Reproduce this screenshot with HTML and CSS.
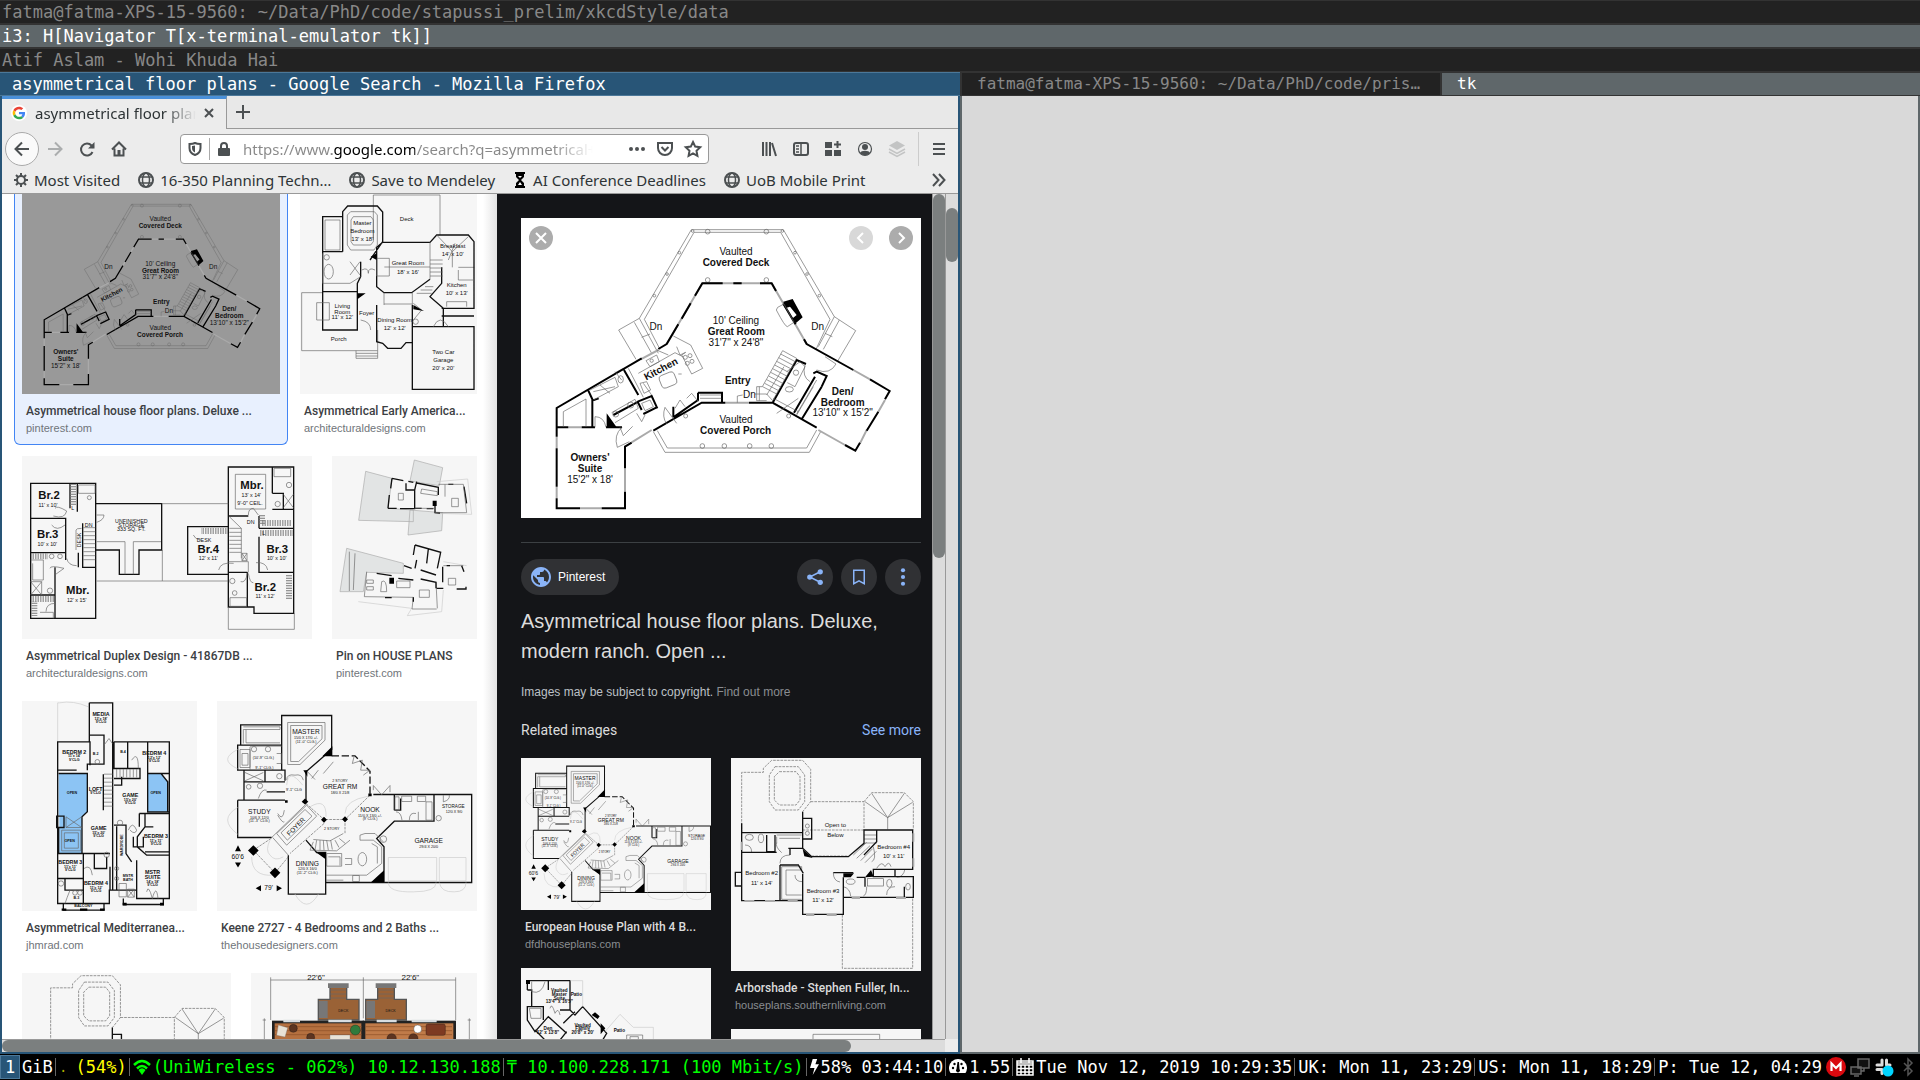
FILE: index.html
```html
<!DOCTYPE html>
<html lang="en">
<head>
<meta charset="utf-8">
<title>i3 desktop</title>
<link rel="stylesheet" href="styles.css">
</head>
<body>
<div class="desktop">
  <div class="titlebar">fatma@fatma-XPS-15-9560: ~/Data/PhD/code/stapussi_prelim/xkcdStyle/data</div>
  <div class="titlebar titlebar-inactive">i3: H[Navigator T[x-terminal-emulator tk]]</div>
  <div class="titlebar">Atif Aslam - Wohi Khuda Hai</div>

  <main class="split">
    <section class="pane">
      <div class="titlebar titlebar-focused">asymmetrical floor plans - Google Search - Mozilla Firefox</div>
      <div class="firefox">
        <div class="tabstrip">
          <div class="tab">
            <svg class="i16" viewBox="0 0 48 48"><g stroke="none"><circle cx="24" cy="24" r="24" fill="#fff"/><g transform="translate(5 5) scale(.79)"><path fill="#ea4335" d="M24 9.5c3.5 0 6.7 1.200 9.200 3.600l6.900-6.900C35.900 2.400 30.500 0 24 0 14.600 0 6.500 5.400 2.600 13.200l8 6.200C12.400 13.700 17.700 9.500 24 9.500z"/><path fill="#4285f4" d="M47 24.500c0-1.600-.2-3.100-.4-4.500H24v9h12.900c-.6 3-2.200 5.500-4.800 7.200l7.700 6C44.400 38 47 31.800 47 24.500z"/><path fill="#fbbc05" d="M10.500 28.600c-.5-1.500-.8-3-.8-4.600s.3-3.100.8-4.600l-8-6.200C.9 16.500 0 20.100 0 24s.9 7.500 2.600 10.800z"/><path fill="#34a853" d="M24 48c6.500 0 11.900-2.100 15.900-5.800l-7.700-6c-2.200 1.500-4.900 2.300-8.200 2.300-6.300 0-11.600-4.200-13.500-9.900l-8 6.200C6.500 42.600 14.600 48 24 48z"/></g></g></svg>
            <span class="tab-label">asymmetrical floor plans</span>
            <button class="icon-btn" aria-label="Close tab"><svg class="i10" viewBox="0 0 10 10"><path d="M1 1l8 8M9 1L1 9"/></svg></button>
          </div>
          <button class="icon-btn newtab" aria-label="New tab"><svg class="i14" viewBox="0 0 14 14"><path d="M7 0v14M0 7h14"/></svg></button>
        </div>

        <div class="navbar">
          <button class="icon-btn back" aria-label="Back"><svg class="i16" viewBox="0 0 16 16"><path d="M15 8H1.500M8 1.500L1.500 8 8 14.500"/></svg></button>
          <button class="icon-btn faded" aria-label="Forward"><svg class="i16" viewBox="0 0 16 16"><path d="M1 8h13.500M8 1.500L14.500 8 8 14.500"/></svg></button>
          <button class="icon-btn" aria-label="Reload"><svg class="i16" viewBox="0 0 16 16"><path d="M13.500 11A6 6 0 1 1 12.500 4.500L14.500 6.500"/><path class="solid" d="M15.500 1v6.500H9z"/></svg></button>
          <button class="icon-btn home" aria-label="Home"><svg class="i16" viewBox="0 0 16 16"><path d="M1 8.500L8 1.500l7 7M3.500 7.500v7h9v-7"/><path class="solid" d="M6.500 9h3v6h-3z"/></svg></button>
          <div class="urlbar">
            <svg class="i14" viewBox="0 0 14 14"><path d="M7 1C5 2 3 2 1.500 2v4c0 4 2.500 6 5.500 7 3-1 5.500-3 5.500-7V2C11 2 9 2 7 1z"/><path class="solid" d="M7 3.500v7C5 9.500 4 8 4 6V4z"/></svg>
            <span class="rule"></span>
            <svg class="i14" viewBox="0 0 14 14"><rect class="solid" x="1" y="6" width="12" height="8" rx="1"/><path d="M4 7V4a3 3 0 0 1 6 0v3"/></svg>
            <input class="url" type="text" aria-label="Address" value="https://www.google.com/search?q=asymmetrical+floor">
            <button class="icon-btn" aria-label="Page actions"><svg class="i16" viewBox="0 0 16 16"><g class="solid"><circle cx="2" cy="8" r="2"/><circle cx="8" cy="8" r="2"/><circle cx="14" cy="8" r="2"/></g></svg></button>
            <button class="icon-btn" aria-label="Pocket"><svg class="i16" viewBox="0 0 16 16"><path d="M1 2h14v5a7 7 0 0 1-14 0z"/><path d="M4.500 6L8 9.500 11.500 6"/></svg></button>
            <button class="icon-btn" aria-label="Bookmark"><svg class="i16" viewBox="0 0 16 16"><path d="M8 1l2.200 4.600 5 .7-3.700 3.500.9 5L8 12.400l-4.400 2.400.9-5L.8 6.300l5-.7z"/></svg></button>
          </div>
          <div class="tools">
            <button class="icon-btn" aria-label="Library"><svg class="i16" viewBox="0 0 16 16"><path d="M2 1v14M5.500 1v14M9 1v14M11 2l4 13"/></svg></button>
            <button class="icon-btn" aria-label="Sidebars"><svg class="i16" viewBox="0 0 16 16"><rect x="1" y="2" width="14" height="12" rx="2"/><path d="M8 2v12M3 5h3M3 8h3M3 11h3" stroke-width="1.500"/></svg></button>
            <button class="icon-btn" aria-label="Extensions"><svg class="i16" viewBox="0 0 16 16"><path class="solid" d="M0 1h7v6H0zM0 9h7v6H0zM9 9h7v6H9z"/><path d="M12.500 0v7M9 3.500h7"/></svg></button>
            <button class="icon-btn" aria-label="Account"><svg class="i16" viewBox="0 0 16 16"><circle cx="8" cy="8" r="6.500" stroke-width="1.200"/><circle class="solid" cx="8" cy="6" r="3"/><path class="solid" d="M3 12c1-3 9-3 10 0-2 3-8 3-10 0z"/></svg></button>
            <button class="icon-btn layers" aria-label="Layers"><svg class="i16" viewBox="0 0 16 16"><path class="solid" d="M8 0l8 4.500L8 9 0 4.500z"/><path d="M0 8l8 4.500L16 8M0 11l8 4.500 8-4.500" stroke-width="1.500"/></svg></button>
            <span class="rule tall"></span>
            <button class="icon-btn" aria-label="Menu"><svg class="i14" viewBox="0 0 14 14"><path d="M1 2h12M1 7h12M1 12h12"/></svg></button>
          </div>
        </div>

        <nav class="bookmarks">
          <a href="#"><svg class="i14" viewBox="0 0 14 14"><circle cx="7" cy="7" r="4"/><path d="M7 0v3M7 11v3M0 7h3M11 7h3M2 2l2 2M10 10l2 2M12 2l-2 2M4 10l-2 2"/></svg>Most Visited</a>
          <a href="#"><svg class="i16" viewBox="0 0 16 16"><g id="globe"><circle cx="8" cy="8" r="7"/><ellipse cx="8" cy="8" rx="3.500" ry="7" stroke-width="1.500"/><path d="M2 5h12M2 11h12" stroke-width="1.500"/></g></svg>16-350 Planning Techn…</a>
          <a href="#"><svg class="i16" viewBox="0 0 16 16"><use href="#globe"/></svg>Save to Mendeley</a>
          <a href="#"><svg class="i14" viewBox="0 0 14 14"><path d="M2 0h10M2 14h10" stroke="#000"/><path d="M3 1h8v3L8 7l3 3v3H3v-3l3-3-3-3z" fill="#000" stroke="none"/><path d="M5 3h4L7 5zM5 12l2-3 2 3z" fill="#fff" stroke="none"/></svg>AI Conference Deadlines</a>
          <a href="#"><svg class="i16" viewBox="0 0 16 16"><use href="#globe"/></svg>UoB Mobile Print</a>
          <button class="icon-btn more" aria-label="More bookmarks"><svg class="i14" viewBox="0 0 14 14"><path d="M1 1l5.500 6L1 13M7 1l5.500 6L7 13"/></svg></button>
        </nav>

        <div class="viewport">
          <div class="page">
            <div class="results">
              <div class="row row-a">
                <figure class="card selected" style="flex-grow:258">
                  <svg class="dim" viewBox="68 71 1194 927"><use href="#deluxe"/></svg>
                  <figcaption><b>Asymmetrical house floor plans. Deluxe ...</b><span>pinterest.com</span></figcaption>
                </figure>
                <figure class="card" style="flex-grow:177">
                  <svg viewBox="900 12 531 600"><g id="early" class="plan">
                    <path class="thin" d="M1120 150V15H1320V135M905 308H968M905 308V482H1133V420M1068 482V505H1133V482M1068 490h65M1068 498h65M1153 231H1290M1375 232H1423"/>
                    <path class="wall" d="M968 305V80H1028V65L1043 48H1132L1148 66V155L1110 210M1028 65V185M968 185H1028M1148 157H1290L1310 135H1405L1422 155V355H1325M1130 210V290L1152 308H1235L1290 268M1130 210V172L1148 157M968 305H1072V420H968V305M1072 305V280L1082 260V215M1130 345V455L1148 460L1163 475H1203L1218 458H1237V345M1237 410H1422V598H1237V410M1325 232V280L1290 320L1330 355V410M1325 378H1422"/>
                    <path class="thin" d="M1290 157V268M1052 65H1123L1132 75V165L1122 180H1052L1042 165V75ZM1060 80H1113L1120 90V155L1112 165H1060L1053 155V90ZM975 90H1020V180H975ZM950 338H988V390H950ZM1130 205H1168V258H1130ZM1310 135L1357 185 1405 140M1357 185V232M968 190V280H1050L1082 260M1050 215L1080 255M1080 215L1050 255M1152 308V345M1237 308V345M1152 342H1237M1290 210H1328M1290 222H1328M1290 234H1328M1290 246H1328M1290 258H1328M1250 310l45 0M1262 300l35 0M1275 290l25 0M1085 240q20-10 20 10q0-20 20-10M1082 390q30 5 30 30M1300 410q20-40 45 0M1240 340l25 20l-25 30M1375 240v30h48M1340 350v-15h60v15M1345 210l20-50"/>
                    <ellipse class="thin" cx="986" cy="245" rx="14" ry="22"/><circle class="thin" cx="980" cy="202" r="8"/><circle class="thin" cx="1247" cy="395" r="8"/>
                    <path class="fill" d="M1130 190v20l-18-10zM1072 310l25 0-25 18zM1240 345l32 18-32-5z"/>
                    <g class="lab s18"><text x="1220" y="94">Deck</text><text x="1087" y="104">Master</text><text x="1087" y="129">Bedroom</text><text x="1087" y="153">13' x 18'</text><text x="1224" y="226">Great Room</text><text x="1224" y="251">18' x 16'</text><text x="1358" y="174">Breakfast</text><text x="1358" y="198">14' x 10'</text><text x="1370" y="292">Kitchen</text><text x="1370" y="316">10' x 13'</text><text x="1027" y="354">Living</text><text x="1027" y="371">Room</text><text x="1027" y="388">11' x 12'</text><text x="1100" y="376">Foyer</text><text x="1184" y="396">Dining Room</text><text x="1184" y="420">12' x 12'</text><text x="1016" y="452">Porch</text><text x="1330" y="491">Two Car</text><text x="1330" y="516">Garage</text><text x="1330" y="541">20' x 20'</text></g>
                  </g></svg>
                  <figcaption><b>Asymmetrical Early America...</b><span>architecturaldesigns.com</span></figcaption>
                </figure>
              </div>

              <div class="row row-b">
                <figure class="card" style="flex-grow:290">
                  <svg viewBox="66 33 870 549"><g class="plan">
                    <path class="wall" d="M92 115H287V520H92ZM92 220H197V345M92 323H197M232 115V200M210 115V190M248 235V367H287M165 367V520M92 450H165M235 323V367M287 176H485V315H417V388H358V315H287M685 66H881V505H762V486H685ZM563 245H685V388H563ZM685 213H745M817 66V145M817 193H881M777 250H881M777 275V382H881M817 145H850V193M742 382V486M685 382H742M777 213V250"/>
                    <path class="thin" d="M485 176H685M290 408H685M487 315V408M685 486V553H883V505M706 88H797V192H706ZM92 345H130V405H98V355M92 410L125 450M125 410L92 450M92 410H125V450M850 148L880 188M880 148L850 188M235 120H285V145H235ZM822 70H872V95H822ZM690 458H740V484H690ZM290 290H375V388M400 388V290H483M120 502H160V520M745 382V350H685M726 325H741V347H726ZM726 325L741 347M741 325L726 347M228 315V255Q228 250 245 250M580 270q5 12 20 15"/>
                    <path class="thin" d="M250 248h36M250 260h36M250 272h36M250 284h36M250 296h36M250 308h36M250 320h36M250 332h36M250 344h36M688 250h36M688 262h36M688 274h36M688 286h36M688 298h36M688 310h36M688 322h36M724 250V340M688 215L724 250"/>
                    <path class="hatch" d="M219 118V182M605 258H683M780 264H878M786 234H876M95 462H162M867 390V465M95 334H142M103 470V515M786 210V240"/>
                    <path class="thin" d="M165 190q5-10 35 8q-5 25-40 15M155 240q15 20 40 0M150 370q0-10 42 0l-25 18M290 210h22q0 15-22 22M138 500q0-25 28-25M200 340q5 22 30 22M656 375q5-25 45-20M803 375q-5-25-35-22M745 385q5 30 15 28M742 385q-5 30-20 25M745 210q0-20 15-20l15 20"/>
                    <circle class="thin" cx="268" cy="158" r="6"/><circle class="thin" cx="155" cy="334" r="7"/><circle class="thin" cx="180" cy="334" r="7"/><circle class="thin" cx="867" cy="120" r="8"/><circle class="thin" cx="833" cy="177" r="8"/><circle class="thin" cx="150" cy="437" r="8"/><circle class="thin" cx="697" cy="408" r="8"/><circle class="thin" cx="704" cy="444" r="7"/>
                    <g class="lab bold s34"><text x="147" y="163">Br.2</text><text x="143" y="279">Br.3</text><text x="233" y="448">Mbr.</text><text x="756" y="132">Mbr.</text><text x="625" y="323">Br.4</text><text x="832" y="323">Br.3</text><text x="796" y="437">Br.2</text></g>
                    <g class="lab s16"><text x="144" y="186">11' x 10'</text><text x="142" y="302">10' x 10'</text><text x="230" y="470">12' x 15'</text><text x="754" y="155">13' x 14'</text><text x="750" y="180">9'-0" CEIL.</text><text x="625" y="345">12' x 11'</text><text x="830" y="345">10' x 10'</text><text x="795" y="459">11' x 12'</text><text x="394" y="233">UNFINISHED</text><text x="394" y="245">STORAGE</text><text x="394" y="257">333 SQ. FT.</text><text x="266" y="245">DN</text><text x="752" y="237">DN</text><text x="612" y="290">DESK</text><text x="791" y="270">L</text><text x="218" y="196">L</text><text transform="translate(243 285) rotate(-90)">DESK</text></g>
                  </g></svg>
                  <figcaption><b>Asymmetrical Duplex Design - 41867DB ...</b><span>architecturaldesigns.com</span></figcaption>
                </figure>
                <figure class="card" style="flex-grow:145">
                  <svg viewBox="996 33 435 549"><g class="plan">
                    <path class="shade" d="M1097 79L1176 100 1164 190 1240 195V230L1076 226ZM1243 45L1328 68 1318 122 1230 108ZM1230 195L1328 203 1325 257 1224 270ZM1040 310L1210 355V385L1100 382 1090 440 1020 440ZM1176 100"/>
                    <path class="ghost" d="M1310 110L1403 102 1415 208 1310 205M1075 470L1235 490 1222 512 1325 500 1330 435M1330 350L1400 362"/>
                    <path class="wall" d="M1176 100L1210 107M1225 109L1240 112M1250 114L1315 127V150M1164 190H1190M1200 191H1244V165M1176 100L1172 130M1168 150L1164 190M1218 115V135H1244L1250 110M1305 180V203L1320 204M1345 118H1360M1392 125L1400 175M1244 135V190H1265M1280 191H1300"/>
                    <path class="thin" d="M1315 118H1390L1400 203H1305M1244 190H1305M1100 380L1093 455 1240 457 1236 492H1310M1308 412L1312 490M1330 362H1390"/>
                    <path class="wall" d="M1245 300L1322 322 1312 370M1245 300L1240 330M1285 312L1280 355M1250 345L1245 370M1212 362L1235 370M1262 375L1308 390M1262 402L1308 412V430M1310 430H1330M1370 432H1398V425M1385 362L1392 380M1328 365V412M1155 458H1175M1130 385L1175 392M1340 362H1350M1195 400L1240 405M1240 457V470"/>
                    <path class="thin" d="M1265 132L1312 140V152L1262 145ZM1195 145h15v20h-15zM1335 118V155M1355 160h20v25h-20zM1145 410q15-10 15 30h-18zM1258 435h30v22h-30zM1345 400h22v20h-22zM1190 408h40v20h-40zM1100 405h20v10h-20zM1100 425h20v10h-20zM1048 320v118M1065 325l-5 110"/>
                    <path class="fill" d="M1298 167h12v16h-12zM1168 398h14v18h-14z"/>
                  </g></svg>
                  <figcaption><b>Pin on HOUSE PLANS</b><span>pinterest.com</span></figcaption>
                </figure>
              </div>

              <div class="row row-c">
                <figure class="card" style="flex-grow:175">
                  <svg viewBox="66 33 525 629"><g class="plan">
                    <path d="M176 250H262V365L246 380V490H178V378H176ZM443 250H483L503 275V365H443Z" fill="#8cc4f4" stroke="none"/>
                    <path class="ghost" d="M173 155V38H178Q220 30 265 50"/>
                    <path class="wall" d="M268 38H338V600H328V640H173V155H270V225M268 38V155M270 135H312V222H262V240M176 250H262V365L246 380V490M173 240H230M170 378H192V412H170ZM176 412V490H330M173 565H250V490M195 565V600H250M250 565V640M283 490V535H320V500M330 530V600M310 252V360M270 155V222M173 490V640M190 642V660H312V642M342 155H508V625H410V510V600H350M342 155V235H420V265H342M342 285H365V260M383 155V235M443 155V250H508M443 250V365H508M418 370H508V400M435 370V410H460M435 485H508V495H440L412 470V440L435 410M418 370V410M342 405H378V490L395 515M350 408V600M328 600H350M370 625V643H490V625M483 250L503 275V365M400 440V470H430V440"/>
                    <path class="thin" d="M312 252h26M312 264h26M312 276h26M312 288h26M312 300h26M312 312h26M312 324h26M312 336h26M312 348h26M350 237v25M360 237v25M370 237v25M380 237v25M390 237v25M400 237v25M410 237v25M185 420H242V482H185ZM193 428H235V474H193ZM198 380L245 412M245 380L198 412M198 380V412H245M357 580h22v40h-22zM383 597h20v24h-20zM383 597l20 24M403 597l-20 24M385 420q12-30 25 0q-5 15-20 0M440 605q5-25 17 20q12-45 17 0M252 535q20-15 25 20M210 600q-10 25-15 40M395 210q20-30 20 25M312 165l15-20 10 15"/>
                    <circle class="thin" cx="292" cy="215" r="7"/><circle class="thin" cx="183" cy="580" r="8"/><circle class="thin" cx="225" cy="608" r="7"/><circle class="thin" cx="240" cy="608" r="7"/><circle class="thin" cx="350" cy="535" r="6"/><circle class="thin" cx="350" cy="565" r="6"/><circle class="thin" cx="320" cy="494" r="8"/><circle class="thin" cx="360" cy="398" r="8"/>
                    <path class="fill" d="M240 655h22v7h-22zM185 655h14v7h-14zM300 655h14v7h-14zM368 638h12v8h-12zM480 638h12v8h-12z"/>
                    <g class="lab bold s16"><text x="303" y="78">MEDIA</text><text x="223" y="191">BEDRM 2</text><text x="463" y="196">BEDRM 4</text><text x="287" y="302">LOFT</text><text x="391" y="322">GAME</text><text x="296" y="421">GAME</text><text x="468" y="445">BEDRM 3</text><text x="211" y="522">BEDRM 3</text><text x="288" y="585">BEDRM 4</text><text x="458" y="553">MSTR</text><text x="458" y="567">SUITE</text></g>
                    <g class="lab bold s12"><text x="303" y="89">13'x 18'</text><text x="303" y="99">9'CLG</text><text x="223" y="202">11'x 14'</text><text x="223" y="212">9'CLG</text><text x="463" y="207">12'x 12'</text><text x="463" y="217">9'CLG</text><text x="287" y="312">9'CLG</text><text x="391" y="333">15'x 20'</text><text x="391" y="343">9'CLG</text><text x="296" y="432">15'x 20'</text><text x="296" y="442">9'CLG</text><text x="468" y="456">11'x 11'</text><text x="468" y="466">9'CLG</text><text x="211" y="533">11'x 11'</text><text x="211" y="543">9'CLG</text><text x="288" y="596">11'x 12'</text><text x="288" y="606">9'CLG</text><text x="458" y="579">14'x 18'</text><text x="458" y="589">9'CLG</text><text x="216" y="312">OPEN</text><text x="467" y="311">OPEN</text><text x="209" y="455">OPEN</text><text x="250" y="650">BALCONY</text><text x="287" y="196">B.2</text><text x="369" y="190">B.4</text><text x="229" y="628">B.3</text><text x="384" y="562">MSTR</text><text x="384" y="572">BATH</text><text transform="translate(368 465) rotate(-90)">WARDROBE</text></g>
                  </g></svg>
                  <figcaption><b>Asymmetrical Mediterranea...</b><span>jhmrad.com</span></figcaption>
                </figure>
                <figure class="card" style="flex-grow:260">
                  <svg viewBox="651 33 780 629"><g id="keene" class="plan">
                    <path class="wall" d="M722 165V104H845M845 240V76H995V178L918 245V335M845 165H713V240H855V272M732 240V275H795V242M732 330V275M855 275H795M713 330H855M713 330V442H815M1120 313H1415V577H1150M1183 315V360M1302 315V393H1183L1130 445L1152 470V577H978M1183 360H1202V325M865 495V612H977V487H950L918 450M800 305H855"/>
                    <path class="wall broken" d="M995 197H1065L1110 243V315"/>
                    <path class="thin" d="M815 442L920 340M818 442L865 495M730 110H840V118H730V160M738 118V158H840M863 97H975V150L900 223H863ZM872 106H966V146L896 214H872ZM720 178H750V232H720ZM726 190H744V225H726ZM750 168H845M750 240V170M735 247L790 272M790 247L735 272M970 250L1000 215M935 265L955 240M918 240L945 268M830 430L920 345 950 378 860 465ZM843 428L915 358 936 378 862 450ZM980 490H1025V528H980ZM985 500H1020V526M978 555H1100L1145 520V470L1120 450H1080V435L1095 430H1125L1150 455M978 570H1030M1132 520V470L1115 460M1058 556h20v18h-20zM1205 318h30v16h-30zM1252 318h25v16h-25zM1278 335h18v55h-18zM1185 320h12v40h-12zM1255 365v25M830 190h14v30h-14"/>
                    <path class="thin" d="M940 455l-10 25M950 450l-5 30M960 450l0 30M970 450l2 30M980 450l5 30M992 450l5 28M1005 450l12 22M1018 445l18 15M940 448L990 452 1030 430M930 480L1010 482 1050 450"/>
                    <path class="ghost" d="M713 178q-60 30 0 58M713 352q-60 35 0 80M885 612q35 60 70 0M1165 502H1310V572H1165ZM1318 502H1398V572H1318ZM1165 577q0 30 75 28q70 0 68-28M1318 577q5 30 45 28q35 0 35-28M755 500q0 60 65 55M930 350Q980 320 978 380M1035 370Q1035 330 1105 318M810 450q-15 30 0 45q15 20 40 5M860 285q5-55 48 0"/>
                    <path class="thin dash" d="M760 480L825 548M865 500L825 548M918 340L972 388H1035L1110 315M1035 388V430M972 388V400M972 400L870 490M760 480L813 445"/>
                    <path class="thin" d="M1120 300v-14l25 28 25-28v20M1062 200l-5 20 30-10-5 30 28 0-20 15M833 370q15 25 20-10M833 375q15 25 20 20M860 270q0-20 25-15q20-5 25 15M1188 365q15 0 18 25M1228 390q0-25 20-20M1330 315v20q20-5 18-20M775 325q10-30 25-25M1035 505h20v18h-20"/>
                    <circle class="thin" cx="762" cy="177" r="8"/><circle class="thin" cx="804" cy="177" r="8"/><circle class="thin" cx="780" cy="287" r="8"/><circle class="thin" cx="838" cy="258" r="8"/><circle class="thin" cx="746" cy="290" r="7"/><ellipse class="thin" cx="1087" cy="507" rx="13" ry="20"/><circle class="thin" cx="1316" cy="384" r="8"/><circle class="thin" cx="1150" cy="447" r="10"/>
                    <path class="fill" d="M997 168v30h-30zM1152 540v37h-40zM977 487v20l-28-20zM760 465l16 16-16 16-16-16zM825 532l16 16-16 16-16-16zM714 465l9 18h-18zM714 532l9-15h-18zM767 594l16-9v18zM846 594l-16-9v18zM972 380l9 9-9 9-9-9zM1035 378l9 9-9 9-9-9zM910 240h12v20zM915 325l10 10-10 8-10-8zM855 330h8v8h-8zM1105 310h10v8h-10z"/>
                    <g class="lab s20"><text x="918" y="133">MASTER</text><text x="1020" y="297">GREAT RM</text><text x="778" y="373">STUDY</text><text x="1110" y="367">NOOK</text><text class="s14" x="1360" y="355">STORAGE</text><text x="1286" y="459">GARAGE</text><text x="922" y="528">DINING</text><text transform="translate(893 414) rotate(-45)">FOYER</text><text x="713" y="507">60'6</text><text x="806" y="601">79'</text></g>
                    <g class="lab s12"><text x="918" y="148">15/0 X 17/0 +/-</text><text x="918" y="159">(11'-0" CLG.)</text><text x="790" y="208">(10'-9" CLG.)</text><text x="793" y="237">9'-1" CLG.)</text><text x="1020" y="276">2 STORY</text><text x="1020" y="311">18/0 X 21/8</text><text x="778" y="387">10/6 X 12/0</text><text x="778" y="397">(11'-3" CLG.)</text><text x="1110" y="381">11/0 X 13/0 +/-</text><text x="1110" y="391">(9' CLG.)</text><text x="1362" y="369">12/0 X 9/0</text><text x="1286" y="473">29/4 X 20/0</text><text x="922" y="541">12/0 X 16/0</text><text x="922" y="552">(11'-2" CLG.)</text><text x="995" y="419">2 STORY</text><text x="882" y="303">9'-1" CLG</text></g>
                  </g></svg>
                  <figcaption><b>Keene 2727 - 4 Bedrooms and 2 Baths ...</b><span>thehousedesigners.com</span></figcaption>
                </figure>
              </div>

              <div class="row row-c">
                <figure class="card" style="flex-grow:209">
                  <svg viewBox="640 53 620 630" preserveAspectRatio="xMidYMin slice"><use href="#arbor"/></svg>
                </figure>
                <figure class="card" style="flex-grow:226">
                  <svg viewBox="753 849 678 630"><g class="plan">
                    <path class="thin" d="M812 870H1367M812 862V990M1090 862V985M1367 862V990M793 985V1070M1408 985V1070M788 990h10M1403 990h10"/>
                    <path fill="#9a6236" stroke="#555" stroke-width="4" d="M955 928H990V888H1040V928H1077V990H955ZM1097 928H1133V888H1183V928H1219V990H1097Z"/>
                    <path fill="#777" stroke="none" d="M984 880h62v14h-62zM1127 880h62v14h-62zM957 932h26v52h-26zM1099 932h26v52h-26z"/>
                    <path class="thin" d="M990 900h48M990 912h48M990 924h48M1133 900h48M1133 912h48M1133 924h48"/>
                    <rect x="820" y="996" width="268" height="480" fill="#b5703f" stroke="#222" stroke-width="8"/><rect x="1092" y="996" width="272" height="480" fill="#c07b49" stroke="#222" stroke-width="8"/>
                    <path stroke="#8d5027" stroke-width="2" d="M825 1010h260M825 1022h260M825 1034h260M1096 1010h260M1096 1022h260M1096 1034h260"/>
                    <path stroke="#d8dde0" stroke-width="8" d="M850 993h50M985 993h70M1130 993h60M1235 993h75"/>
                    <path fill="#e8e2d6" stroke="#777" d="M835 1005l28 8-8 28-25-5zM990 1035h60v30h-60z"/><circle cx="880" cy="1015" r="12" fill="#5c3420"/><circle cx="932" cy="1042" r="12" fill="#5c3420"/><circle cx="1066" cy="1020" r="15" fill="#2f7a3c"/><circle cx="1253" cy="1017" r="12" fill="#fff"/><rect x="1278" y="1002" width="58" height="34" rx="6" fill="#7d3a22"/><circle cx="1175" cy="1045" r="14" fill="#5c3420"/><circle cx="1240" cy="1045" r="14" fill="#5c3420"/>
                    <g class="lab s24"><text x="948" y="869">22'6"</text><text x="1231" y="869">22'6"</text></g>
                    <g class="lab s12"><text x="1030" y="966">DECK</text><text x="1172" y="966">DECK</text></g>
                  </g></svg>
                </figure>
              </div>
            </div>

            <aside class="detail">
              <div class="hero">
                <svg viewBox="63 84 1200 900"><g id="deluxe" class="plan">
                  <path class="thin" d="M574 119H850L1003 380L1067 422 1012 515M574 119L418 385 356 420 408 508M582 127H842L990 388L948 478M582 127L433 388 480 478M418 385L475 490M1003 380L955 470M403 397L455 490M1018 390L970 478M460 725L495 787H928L962 725M472 722L502 774H920L950 720"/>
                  <g class="thin"><circle cx="623" cy="125" r="7"/><circle cx="799" cy="125" r="7"/><circle cx="623" cy="270" r="7"/><circle cx="799" cy="270" r="7"/><circle cx="607" cy="768" r="7"/><circle cx="673" cy="768" r="7"/><circle cx="749" cy="768" r="7"/><circle cx="814" cy="768" r="7"/><circle cx="557" cy="678" r="6"/><circle cx="866" cy="678" r="6"/><circle cx="578" cy="123" r="4"/><circle cx="847" cy="123" r="4"/><circle cx="538" cy="188" r="4"/><circle cx="501" cy="252" r="4"/><circle cx="463" cy="317" r="4"/><circle cx="885" cy="188" r="4"/><circle cx="921" cy="252" r="4"/><circle cx="958" cy="317" r="4"/></g>
                  <path class="window" d="M607 280H815M607 280L500 462M422 508L475 480M345 550L372 536M815 280L920 462M1060 540L1110 568M1155 630L1135 665M1100 720L1080 760M955 720L1035 765M820 640L880 672M170 740V775M170 890V925M240 955H305M375 835V905M455 720L395 757M676 638H747M205 712H245"/>
                  <path class="heavy" d="M668 280H607L585 317M572 340L545 386M535 403L500 462L475 477M425 505L170 654V740M170 775V890M170 925V955H240M305 955H375V905M375 835V770L395 758M460 722L605 638H676M747 638H818L950 713M1035 765L1066 782L1080 758M1100 722L1135 665M1155 628L1169 603L1110 568M1060 540L920 462L912 448M887 403L850 341M828 303L815 280H780M170 712H205M245 712H285M318 712H366M277 712V628L265 602M277 632L296 625M372 540L415 615M818 638L890 510 918 522M594 608H666V636M594 608V630L520 682M413 635L455 618 472 655M413 635L425 660M340 675L415 635M940 550L950 545 980 558 965 590M905 688L965 590M882 668L945 560M700 280h25M470 652l-40 20M520 682V650"/>
                  <path class="fill" d="M850 335L878 327 908 382 887 400 878 385 890 375 870 350 855 355ZM320 712V670L350 712Z"/>
                  <path class="thin" d="M833 352L852 342 882 397 862 410Q855 410 829 360ZM520 438L572 465 608 535 575 552 545 495 557 487 540 495 530 470M415 550L525 488 548 500M385 535L430 622M430 580L455 615M270 600L345 562 355 590 280 630M280 605L345 590M300 585L330 610M190 710V665L258 627V710M345 545L365 570M335 668L405 628 415 655 345 698M860 545L900 515 915 530 885 590 862 578M820 625L895 665M830 670L895 625M890 672L950 570M438 512L470 495 478 515 450 530ZM470 480l35 15M420 580l12 30 20-10-12-25zM940 590l-50 85M425 640l25-10 10 20-25 12z"/>
                  <path class="thin" d="M848 482L787 590M890 505L818 632M848 482L890 505M842 492l42 22M836 503l42 22M830 514l42 22M824 525l42 22M818 536l42 22M812 547l42 22M806 558l42 22M800 569l42 22M794 580l42 22M788 590l42 22M852 530L800 615M787 590H770V632H800M778 590V632M765 612H800L818 632M600 615H664M600 625H664M545 552l-10 0"/>
                  <rect class="thin" x="480" y="550" width="48" height="40" rx="10" transform="rotate(-22 504 570)"/>
                  <g class="thin"><circle cx="347" cy="672" r="9"/><circle cx="392" cy="645" r="9"/><circle cx="888" cy="548" r="8"/><ellipse cx="868" cy="598" rx="12" ry="8"/><ellipse cx="362" cy="568" rx="8" ry="11"/><circle cx="556" cy="502" r="6"/><circle cx="570" cy="497" r="6"/><circle cx="562" cy="520" r="6"/><circle cx="576" cy="514" r="6"/><circle cx="455" cy="512" r="5"/></g>
                  <path class="thin" d="M285 712V680Q312 680 318 712M366 712Q340 735 352 772L388 755M530 700L495 652Q485 680 500 702M712 638V618L728 615M1008 522Q990 555 950 540M975 500L1008 522M915 525Q905 560 930 575M450 432L425 442M975 430L997 440M360 712l10 25 28-28M410 670l15 25 10-20M525 655l15-25 15 20M560 625l15-15 20 25"/>
                  <g class="lab s30"><text x="708" y="196">Vaulted</text><text x="708" y="403">10' Ceiling</text><text x="708" y="467">31'7" x 24'8"</text><text x="468" y="420">Dn</text><text x="953" y="420">Dn</text><text x="748" y="624">Dn</text><text x="708" y="700">Vaulted</text><text x="1028" y="679">13'10" x 15'2"</text><text x="270" y="879">15'2" x 18'</text></g>
                  <g class="lab bold s30"><text x="708" y="228">Covered Deck</text><text x="709" y="435">Great Room</text><text x="713" y="581">Entry</text><text x="707" y="732">Covered Porch</text><text x="1028" y="615">Den/</text><text x="1028" y="647">Bedroom</text><text x="270" y="814">Owners'</text><text x="270" y="846">Suite</text><text transform="translate(487 546) rotate(-28)">Kitchen</text></g>
                </g></svg>
                <button class="round close" aria-label="Close"><svg class="i16" viewBox="0 0 16 16"><path d="M3 3l10 10M13 3L3 13"/></svg></button>
                <button class="round prev" aria-label="Previous"><svg class="i16" viewBox="0 0 16 16"><path d="M10 3L5 8l5 5"/></svg></button>
                <button class="round next" aria-label="Next"><svg class="i16" viewBox="0 0 16 16"><path d="M6 3l5 5-5 5"/></svg></button>
              </div>
              <div class="source">
                <a class="pill" href="#"><svg class="i24" viewBox="0 0 24 24"><path fill="#8ab4f8" d="M12 2C6.480 2 2 6.480 2 12s4.480 10 10 10 10-4.480 10-10S17.520 2 12 2zm-1 17.930c-3.950-.49-7-3.850-7-7.930 0-.62.080-1.210.21-1.790L9 15v1c0 1.100.9 2 2 2v1.930zm6.900-2.540c-.26-.81-1-1.390-1.900-1.390h-1v-3c0-.55-.45-1-1-1H8v-2h2c.55 0 1-.45 1-1V7h2c1.100 0 2-.9 2-2v-.41c2.930 1.190 5 4.060 5 7.410 0 2.080-.8 3.970-2.100 5.390z"/></svg>Pinterest</a>
                <button class="disc" aria-label="Share"><svg class="i20" viewBox="0 0 24 24"><path stroke="#8ab4f8" stroke-width="2" d="M19 5L5 12l14 7"/><g fill="#8ab4f8"><circle cx="19" cy="5" r="3.500"/><circle cx="5" cy="12" r="3.500"/><circle cx="19" cy="19" r="3.500"/></g></svg></button>
                <button class="disc" aria-label="Save"><svg class="i20" viewBox="0 0 24 24"><path stroke="#8ab4f8" stroke-width="2" fill="none" d="M5 3h14v18l-7-4-7 4z"/></svg></button>
                <button class="disc" aria-label="More"><svg class="i20" viewBox="0 0 24 24"><g fill="#8ab4f8"><circle cx="12" cy="3" r="2.800"/><circle cx="12" cy="12" r="2.800"/><circle cx="12" cy="21" r="2.800"/></g></svg></button>
              </div>
              <h2>Asymmetrical house floor plans. Deluxe, modern ranch. Open ...</h2>
              <p class="legal">Images may be subject to copyright. <a href="#">Find out more</a></p>
              <div class="related-head"><h3>Related images</h3><a href="#">See more</a></div>
              <div class="related">
                <div class="col">
                  <figure>
                    <svg class="h152" viewBox="664 44 753 602"><use href="#keene"/></svg>
                    <figcaption><b>European House Plan with 4 B...</b><span>dfdhouseplans.com</span></figcaption>
                  </figure>
                  <figure>
                    <svg class="h213" viewBox="63 684 570 639"><g class="plan">
                      <path class="wall" d="M82 750V722H145V750M145 722H210V770M82 750H95V800H82V840L105 875L145 830 200 880M210 770V810L225 825L248 800L320 880 305 905M180 810H210M82 800H130V840M190 850L225 815M105 870L140 905M200 875L180 900"/>
                      <path class="ghost" d="M210 722H248V800M315 875L360 823 400 862H460V900"/>
                      <path class="thin" d="M95 725v30q30 10 40-30M88 805h35v30h-30zM150 805q5-20 15 15q10-20 15 5M380 905V885H428V905M390 905v-15h25v15"/>
                      <path class="fill" d="M275 825l10-8 14 12-6 8zM302 850l14 15-14 18zM78 720h12v12h-12z"/>
                      <g class="lab s14 bold"><text x="178" y="756">Vaulted</text><text x="178" y="768">Master</text><text x="178" y="779">Suite</text><text x="178" y="790">13'4" x 16'5"</text><text x="229" y="767">Patio</text><text x="144" y="871">Den</text><text x="144" y="882">12' x 13'8"</text><text x="248" y="860">Vaulted</text><text x="248" y="871">Family</text><text x="248" y="882">20'8" x 20'</text><text x="358" y="877">Patio</text></g>
                    </g></svg>
                  </figure>
                </div>
                <div class="col">
                  <figure>
                    <svg class="h213" viewBox="693 54 570 639"><g id="arbor" class="plan">
                      <path class="thin dash" d="M725 278V97H790V85L815 61H908L932 88V185L908 215M932 185H1092V268M1092 185L1115 158H1213L1240 185V268M825 80H895L914 105V185L895 210H825L808 185V105ZM838 95H888L900 110V180L888 195H838L823 180V110ZM908 270H1092M1027 525V685H1238V472M935 348H1045"/>
                      <path class="thin" d="M1095 185L1163 233 1115 160M1163 233L1213 160M1163 233L1238 187M1163 233V268M830 285H905M830 290V310M838 295H900M845 380H905V390H858V465H905M845 380V478H905M1092 285h38M1092 297h38M1092 309h38M1060 345l40-38M1070 355l40-38M1082 362l36-36M1095 368l34-34M845 338Q825 320 830 308M1120 320q10 40-5 45M840 370q0-25 30-25M885 405q0 20 22 20M1000 398q0 25 20 28M1030 440q20 5 22 28M1100 440q0 25-10 28M1160 465q0-25 25-25M1130 385q15-25 25-5q12-20 18 0M1190 412q20 0 25-25M735 315q20 0 20 22"/>
                      <path class="wall" d="M725 250V278H908V215M908 278V325L935 350H1045L1092 310V270H1238V388H1120V410H1240V472H1030V523H908V402M1000 398H1060M725 278V482H908M725 337H830M840 375H895L910 400M825 285V335H800V285M865 325H908M840 375V482M908 235H935V297H908ZM725 397H706V438H725M1095 412V440M1030 412V472M870 325V345M1130 270V305L1092 345M1120 388H1185V412M1213 440V470M1070 412l25 0"/>
                      <path class="fill" d="M1030 400h32l-10 12h-22zM1095 412l18-22 8 20zM908 328l30 26-25-5z"/>
                      <path class="window" d="M733 483h30M795 483h30M863 483h30M918 525h25M980 525h30M1055 474h25M1188 474h30M1240 280v25M1240 355v25M725 305v25"/>
                      <ellipse class="thin" cx="748" cy="292" rx="12" ry="9"/><ellipse class="thin" cx="783" cy="295" rx="8" ry="13"/><ellipse class="thin" cx="1052" cy="425" rx="13" ry="8"/><circle class="thin" cx="922" cy="258" r="6"/><circle class="thin" cx="922" cy="280" r="6"/><ellipse class="thin" cx="1168" cy="430" rx="8" ry="12"/><ellipse class="thin" cx="1224" cy="440" rx="7" ry="10"/><rect class="thin" x="1102" y="416" width="48" height="22"/>
                      <g class="lab s18"><text x="1006" y="262">Open to</text><text x="1006" y="290">Below</text><text x="1181" y="326">Bedroom #4</text><text x="1181" y="354">10' x 11'</text><text x="785" y="406">Bedroom #2</text><text x="785" y="434">11' x 14'</text><text x="969" y="458">Bedroom #3</text><text x="969" y="486">11' x 12'</text></g>
                    </g></svg>
                    <figcaption><b>Arborshade - Stephen Fuller, In...</b><span>houseplans.southernliving.com</span></figcaption>
                  </figure>
                  <figure>
                    <svg class="h213" viewBox="881 -1 556 639"><use href="#early"/></svg>
                  </figure>
                </div>
              </div>
            </aside>
            <div class="vscroll inner"><span class="thumb"></span></div>
          </div>
          <div class="vscroll"><span class="thumb"></span></div>
          <div class="hscroll"><span class="thumb"></span></div>
          <div class="corner"></div>
        </div>
      </div>
    </section>

    <section class="pane">
      <div class="tabs">
        <div class="titlebar">fatma@fatma-XPS-15-9560: ~/Data/PhD/code/pris…</div>
        <div class="titlebar titlebar-inactive">tk</div>
      </div>
      <div class="tk"></div>
    </section>
  </main>

  <footer class="bar">
    <button class="ws">1</button>
    <div class="status">
      <span class="cut">GiB</span>
      <span class="cell yellow"><small>.</small>(54%)</span>
      <span class="cell green"><svg class="i18" viewBox="0 0 18 18"><path d="M1 7Q9-1 17 7M4 10.500Q9 5.500 14 10.500" fill="none" stroke="#0f0" stroke-width="2.500"/><path d="M5.500 12Q9 8.500 12.500 12L9 17z" fill="#0f0"/></svg>(UniWireless - 062%) 10.12.130.188</span>
      <span class="cell green">₸ 10.100.228.171 (100 Mbit/s)</span>
      <span class="cell"><svg class="bolt" viewBox="0 0 10 18"><path fill="#fff" d="M3 0h5L6 6h4L3 18l2-8H0z"/></svg>58% 03:44:10</span>
      <span class="cell"><svg class="i18" viewBox="0 0 18 18"><path fill="#fff" d="M1.500 15A9 9 0 1 1 16.500 15z"/><g fill="#000"><circle cx="4" cy="10" r="1.200"/><circle cx="5.500" cy="6" r="1.200"/><circle cx="12.500" cy="6" r="1.200"/><circle cx="14" cy="10" r="1.200"/><path d="M8.500 4h1.500l.5 7a2 2 0 1 1-3 0z"/></g></svg>1.55</span>
      <span class="cell"><svg class="i18" viewBox="0 0 18 18"><path d="M1 3h16v14H1zM1 7h16M1 10.500h16M1 14h16M5 7v10M9 7v10M13 7v10M5 0v5M13 0v5M1 5h16" fill="none" stroke="#fff" stroke-width="1.500"/></svg>Tue Nov 12, 2019 10:29:35</span>
      <span class="cell">UK: Mon 11, 23:29</span>
      <span class="cell">US: Mon 11, 18:29</span>
      <span class="cell">P: Tue 12, 04:29</span>
    </div>
    <div class="tray">
      <svg class="i20" viewBox="0 0 20 20"><circle cx="10" cy="10" r="10" fill="#d9090f"/><path d="M5.500 14V6.500L10 11l4.500-4.500V14" fill="none" stroke="#fff" stroke-width="2.200"/></svg>
      <svg class="i20" viewBox="0 0 20 20"><path d="M8 2h11v9H8zM1 10h10v7H1zM4 19h5M14 11v3h-3" fill="#111" stroke="#666" stroke-width="1.500"/></svg>
      <svg class="i20" viewBox="0 0 20 20"><path d="M8 3v5M3 8h3M12.500 3v5M13 8h3M3 12.500h5M8 12.500v4" stroke="#ddd" stroke-width="3" stroke-linecap="round"/><circle cx="14" cy="14" r="5.500" fill="#00d4ff"/></svg>
      <svg class="i20" viewBox="0 0 20 20"><path d="M6 6l8 8-4 4V2l4 4-8 8" fill="none" stroke="#555" stroke-width="1.500"/></svg>
    </div>
  </footer>
</div>
</body>
</html>
```
FILE: styles.css
```css
* { box-sizing: border-box; }
body { margin: 0; background: #000; }
figure, h2, h3, p { margin: 0; }
button { border: 0; padding: 0; background: none; font: inherit; color: inherit; }
a { color: inherit; text-decoration: none; }
svg { display: block; flex: none; }

.desktop {
  display: flex;
  flex-direction: column;
  height: 100vh;
  overflow: hidden;
  font: 17px/22px "DejaVu Sans Mono", monospace;
}

/* i3 title bars */
.titlebar {
  height: 24px;
  padding: 0 2px;
  border-top: 1px solid #333;
  border-bottom: 1px solid #333;
  background: #222;
  color: #888;
  white-space: pre;
  overflow: hidden;
}
.titlebar-inactive { background: #5f676a; color: #fff; }
.titlebar-focused { background: #285577; border-color: #4c7899; color: #fff; padding-left: 12px; }
.split { flex: 1; display: flex; min-height: 0; }
.pane { flex: 1 1 0; min-width: 0; display: flex; flex-direction: column; }
.tabs { display: flex; }
.tabs .titlebar { flex: 1 1 0; min-width: 0; padding: 0 0 0 15px; border-left: 2px solid #333; font-size: 16px; }
.tk { flex: 1; background: #d9d9d9; border: 2px solid #5f676a; border-top: 0; }

/* Firefox chrome */
.firefox {
  flex: 1;
  min-height: 0;
  display: flex;
  flex-direction: column;
  border: 2px solid #285577;
  border-top: 0;
  background: #ececec;
  color: #2e3436;
  font: 15px/22px "Noto Sans", sans-serif;
}
.i10 { width: 10px; height: 10px; }
.i14 { width: 14px; height: 14px; }
.i16 { width: 16px; height: 16px; }
.i18 { width: 18px; height: 18px; }
.i20 { width: 20px; height: 20px; }
.i24 { width: 24px; height: 24px; }
.firefox svg.i10, .firefox svg.i14, .firefox svg.i16 { fill: none; stroke: #4c5052; stroke-width: 2; overflow: visible; }
.solid { fill: #4c5052; stroke: none; }
.icon-btn { display: flex; align-items: center; justify-content: center; }
.faded { opacity: .4; }
.layers { opacity: .25; }

.tabstrip { display: flex; height: 33px; background: #e8e8e8; }
.tab {
  display: flex;
  align-items: center;
  gap: 14px;
  width: 225px;
  padding: 0 12px 2px 9px;
  border-top: 3px solid #4a90d9;
  border-right: 1px solid #999;
  background: #ececec;
}
.tab-label {
  flex: 1;
  margin: 0 -6px;
  overflow: hidden;
  white-space: nowrap;
  -webkit-mask-image: linear-gradient(90deg, #000 80%, transparent);
}
.newtab { flex: 1; justify-content: flex-start; padding-left: 9px; border-bottom: 1px solid #999; }

.navbar { display: flex; align-items: center; gap: 16px; height: 40px; padding: 0 12px 0 3px; }
.back { width: 34px; height: 34px; border: 1px solid #aaa; border-radius: 50%; background: #fafafa; margin-right: -8px; }
.home { margin-right: 37px; }
.urlbar {
  flex: 1;
  display: flex;
  align-items: center;
  gap: 12px;
  min-width: 0;
  height: 30px;
  padding: 0 7px;
  border: 1px solid #999;
  border-radius: 4px;
  background: #fff;
}
.urlbar > svg:first-child, .urlbar .rule { margin-right: -5px; }
.rule { width: 1px; height: 22px; background: #aaa; }
.rule.tall { height: 34px; margin: 0 -3px; background: #ccc; }
.url {
  flex: 1;
  min-width: 0;
  border: 0;
  padding: 0;
  outline: 0;
  font: inherit;
  color: transparent;
  background: linear-gradient(90deg, #888 89px, #000 89px, #000 172px, #888 172px, #888 310px, transparent 350px);
  -webkit-background-clip: text;
  background-clip: text;
}
.tools { display: flex; align-items: center; gap: 16px; margin-left: 36px; }

.bookmarks {
  display: flex;
  align-items: center;
  gap: 18px;
  height: 25px;
  padding: 0 12px 3px 12px;
  border-bottom: 1px solid #999;
  white-space: nowrap;
}
.bookmarks a { display: flex; align-items: center; gap: 6px; }
.more { margin-left: auto; }

/* Scrolling page */
.viewport {
  flex: 1;
  min-height: 0;
  display: grid;
  grid-template-columns: 1fr 13px;
  grid-template-rows: 1fr 13px;
}
.page { display: flex; min-height: 0; overflow: hidden; background: #fff; }
.vscroll { background: #dcdcdc; border-left: 1px solid #999; width: 13px; }
.vscroll .thumb { display: block; height: 54px; margin-top: 14px; border-radius: 6px; background: #7b7f7f; }
.vscroll.inner .thumb { height: 364px; margin-top: 0; }
.hscroll { background: #dcdcdc; border-top: 1px solid #999; }
.hscroll .thumb { display: block; width: 90%; height: 12px; border-radius: 6px; background: #7b7f7f; }
.corner { background: #ececec; }

.results {
  flex: 1;
  min-width: 0;
  padding: 0 20px;
  background: linear-gradient(270deg, #e4e4e4, #fff 14px);
  font-family: Roboto, sans-serif;
}
.row { display: flex; gap: 20px; margin-bottom: 12px; }
.card { flex: 1 1 0; min-width: 0; }
.card svg { width: 100%; background: #f6f6f6; }
.row-a svg { height: 200px; }
.row-b svg { height: 183px; }
.row-c svg { height: 210px; }
.selected { margin: 0 -8px -1px; padding: 0 7px; border: 1px solid #4285f4; border-top: 0; border-radius: 0 0 6px 6px; background: #e8f0fe; }
.card .dim { background: #999; }
figcaption { height: 50px; padding: 8px 0 0 4px; white-space: nowrap; overflow: hidden; }
figcaption b, figcaption span { display: block; }
figcaption b { font: 500 12px/18px Roboto, sans-serif; color: #3c4043; }
figcaption span { font: 11px/16px "Liberation Sans", sans-serif; color: #70757a; }

.detail { width: 435px; flex: none; padding: 24px 11px 0 24px; background: #141518; color: #dcdcdc; font-family: "Liberation Sans", sans-serif; }
.hero { position: relative; }
.hero > svg { width: 100%; height: 300px; background: #fff; }
.round { position: absolute; top: 8px; display: flex; align-items: center; justify-content: center; width: 24px; height: 24px; border-radius: 50%; background: #acacac; }
.firefox .round svg.i16 { stroke: #fff; }
.close { left: 8px; }
.prev { right: 48px; background: #d8d8d8; }
.next { right: 8px; }
.source { display: flex; gap: 8px; margin-top: 24px; padding-top: 16px; border-top: 1px solid #3c4043; }
.pill, .disc { display: flex; align-items: center; height: 36px; border-radius: 18px; background: #303134; }
.pill { gap: 5px; padding: 0 14px 0 8px; margin-right: auto; color: #fff; font-size: 12px; }
.disc { width: 36px; justify-content: center; }
.disc svg { fill: none; width: 18px; height: 18px; }
.detail h2 { margin-top: 11px; font-size: 20px; font-weight: 400; line-height: 30px; }
.legal { margin-top: 16px; font-size: 12px; line-height: 20px; color: #bdc1c6; }
.legal a { color: #8a8d91; }
.related-head { display: flex; justify-content: space-between; margin: 18px 0; font: 14px/20px Roboto, sans-serif; }
.related-head h3 { font: inherit; }
.related-head a { color: #8ab4f8; }
.related { display: flex; gap: 20px; }
.col { flex: 1 1 0; min-width: 0; }
.col figure { margin-bottom: 8px; }
.col svg { width: 100%; background: #f6f6f6; }
.h152 { height: 152px; }
.h213 { height: 213px; }
.col figcaption b { color: #dcdcdc; }
.col figcaption span { color: #8a8d91; }

/* Floor plan drawings */
.plan { fill: none; stroke: #111; }
.plan .wall { stroke-width: 4; }
.plan .heavy { stroke-width: 6; stroke: #000; }
.plan .thin { stroke: #666; stroke-width: 2; }
.plan .ghost { stroke: #ccc; stroke-width: 2; }
.plan .window { stroke: #aaa; stroke-width: 6; }
.plan .shade { fill: #e2e4e4; stroke: #aaa; stroke-width: 2; }
.plan .hatch { stroke: #777; stroke-width: 18; stroke-dasharray: 2 3; }
.plan .dash { stroke-dasharray: 8 3; }
.plan .broken { stroke-dasharray: 22 8; }
.plan .fill { fill: #000; stroke: none; }
.lab { fill: #111; stroke: none; text-anchor: middle; font-family: "Liberation Sans", sans-serif; }
.bold { font-weight: 700; }
.s12 { font-size: 11px; }
.s14 { font-size: 14px; }
.s16 { font-size: 16px; }
.s18 { font-size: 18px; }
.s20 { font-size: 20px; }
.s24 { font-size: 24px; }
.s30 { font-size: 30px; }
.s34 { font-size: 34px; }

/* i3bar */
.bar { display: flex; align-items: center; gap: 2px; height: 26px; color: #fff; background: #000; white-space: pre; }
.ws { flex: none; width: 20px; height: 24px; border: 1px solid #4c7899; background: #285577; }
.status { flex: 1; min-width: 0; display: flex; align-items: center; justify-content: space-between; font-size: 17px; }
.cut { width: 31px; }
.cell { display: flex; align-items: center; gap: 2px; padding-left: 3px; border-left: 1px solid #666; height: 18px; }
.cell small { padding: 0 6px 0 0; font-size: 14px; color: #aa0; }
.yellow { color: #ff0; }
.green { color: #0f0; }
.bolt { width: 9px; height: 18px; }
.tray { flex: none; display: flex; align-items: center; gap: 4px; padding: 0 2px; }
```
